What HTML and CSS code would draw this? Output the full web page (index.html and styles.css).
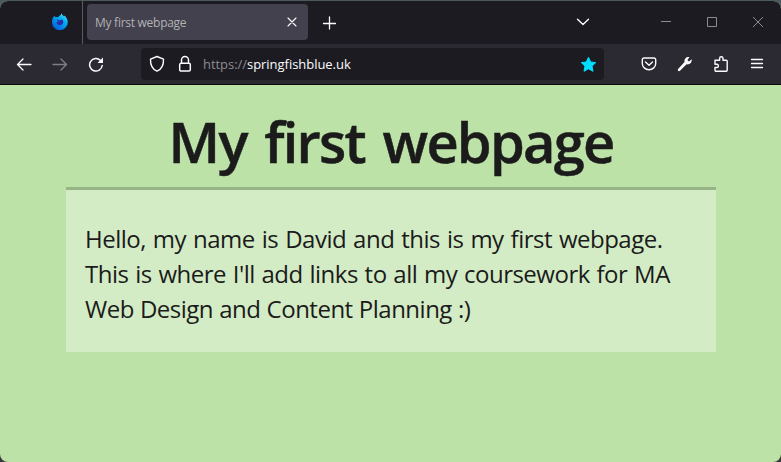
FILE: index.html
```html
<!DOCTYPE html>
<html lang="en">
<head>
<meta charset="utf-8">
<title>My first webpage</title>
<link rel="stylesheet" href="styles.css">
</head>
<body>
<div class="window">
  <div class="tabs">
    <div class="pinned">
      <svg width="18" height="18" viewBox="0 0 18 18">
        <defs><linearGradient id="fox" x1="1" y1="0" x2=".3" y2="1"><stop offset="0" stop-color="#80ebff"/><stop offset=".4" stop-color="#00b3f4"/><stop offset="1" stop-color="#0060df"/></linearGradient></defs>
        <path fill="url(#fox)" d="M3.2 3.1c.5.2 1 .7 1.3 1.1.9-.3 1.8-.2 2.6.2C8 2.700 9 2.300 9.800 2c.1-.8.400-1.300.8-1.800.4 1.500 1.500 2.100 2.500 3.200l.2-1c1.600 1.200 3.500 3.600 3.500 6.800A7.900 7.900 0 0 1 1 9.500C1 7 1.700 4.600 3.200 3.100z"/>
        <path fill="#2b2da8" d="M5.600 6.600c1-.1 2 .2 2.600.8l2.500-.9c1.600.9 2 2.600 1.200 4.100-1.100 1.900-3.700 2.200-5.300.9-.9-.8-1.200-1.800-1-2.700l2 .2c-.8-.8-1.500-1.600-2-2.400z"/>
      </svg>
    </div>
    <div class="tab"><span class="tab-title">My first webpage</span>
      <svg class="icon" width="10" height="10" viewBox="0 0 10 10"><path stroke-width="1.100" d="M1 1l8 8M9 1L1 9"/></svg>
    </div>
    <svg class="icon new-tab" width="14" height="14" viewBox="0 0 14 14"><path d="M7.500 1v12M1.500 7.500h12"/></svg>
    <svg class="icon all-tabs" width="14" height="8" viewBox="0 0 14 8"><path stroke-width="1.400" d="M1.500 1.300L7 6.500l5.500-5.200"/></svg>
    <div class="controls">
      <svg width="12" height="12" viewBox="0 0 12 12"><path d="M1 5.500h10"/></svg>
      <svg width="12" height="12" viewBox="0 0 12 12"><path d="M1.500 1.500h9v9h-9z"/></svg>
      <svg width="12" height="12" viewBox="0 0 12 12"><path d="M1 1l10 10M11 1L1 11"/></svg>
    </div>
  </div>
  <div class="toolbar">
    <div class="nav">
      <svg class="icon" width="16" height="16" viewBox="0 0 16 16"><path d="M15 8.500H1.500M7 3L1.500 8.500 7 14"/></svg>
      <svg class="icon off" width="16" height="16" viewBox="0 0 16 16"><path d="M1 8.500h13.500M9 3l5.500 5.500L9 14"/></svg>
      <svg class="icon" width="16" height="16" viewBox="0 0 16 16"><path stroke-width="1.500" d="M14.200 9.500A6.300 6.300 0 1 1 12.500 4.400"/><path fill="#fbfbfe" stroke="none" d="M15 1.500V7H9.500z"/></svg>
    </div>
    <div class="address">
      <svg class="icon" width="16" height="18" viewBox="0 0 16 18"><path stroke-width="1.400" d="M8 1.500l6.500 2.700c.2 5.600-1.600 9.900-6.500 12C3.100 14.100 1.300 9.800 1.500 4.200z"/></svg>
      <svg class="icon" width="14" height="18" viewBox="0 0 14 18"><path stroke-width="1.500" d="M3.500 8V5a3.500 3.500 0 0 1 7 0v3M3 8.300h8a1.300 1.300 0 0 1 1.300 1.300v5.100A1.300 1.300 0 0 1 11 16H3a1.300 1.300 0 0 1-1.300-1.300V9.600A1.300 1.300 0 0 1 3 8.300z"/></svg>
      <span class="url"><span class="scheme">https://</span>springfishblue.uk</span>
      <svg class="star" width="17" height="17" viewBox="0 0 17 17"><path d="M8.500 1.300l2.200 4.700 5.100.6-3.800 3.500 1 5.200-4.500-2.500L4 15.300l1-5.200-3.800-3.500 5.100-.6z"/></svg>
    </div>
    <div class="tools">
      <svg class="icon" width="16" height="16" viewBox="0 0 16 16"><path stroke-width="1.400" d="M3 2h10a1.700 1.700 0 0 1 1.700 1.700V7.500a6.700 6.200 0 0 1-13.400 0V3.700A1.700 1.700 0 0 1 3 2zM4.500 6L8 9.300 11.500 6"/></svg>
      <svg class="icon" width="16" height="16" viewBox="0 0 16 16"><path fill="#fbfbfe" stroke="none" d="M14.600 3.200L12 5.400 10.500 4.200l1.900-3.100C9.600.4 7 2.700 7.500 5.900L1.100 13a1.300 1.300 0 0 0 1.900 1.800l6.600-6.500c3.100.6 5.700-2 5-5.100z"/></svg>
      <svg class="icon" width="16" height="18" viewBox="0 0 16 18"><path stroke-width="1.400" d="M2 7.500V5.300h4.600V3.500a1.700 1.700 0 0 1 3.400 0v1.800h3.200a1 1 0 0 1 1 1v9a1 1 0 0 1-1 1H3a1 1 0 0 1-1-1V12.500h1.800a1.600 1.600 0 0 0 0-3.200H2z"/></svg>
      <svg class="icon" width="16" height="16" viewBox="0 0 16 16"><path d="M2.500 3.500h11M2.500 7.500h11M2.500 11.500h11"/></svg>
    </div>
  </div>
  <main class="page">
    <h1>My first webpage</h1>
    <p class="intro"><span class="l1">Hello, my name is David and this is my first webpage.</span><span class="l2">This is where I'll add links to all my coursework for MA</span><span class="l3">Web Design and Content Planning :)</span></p>
  </main>
</div>
</body>
</html>
```
FILE: styles.css
```css
* { box-sizing: border-box; }
body { margin: 0; padding-top: 1px; height: 462px; background: linear-gradient(#4b5a5c, #38393c); overflow: hidden; }
svg { display: block; flex: none; }
.window { height: 461px; border-radius: 8px; overflow: hidden; background: #bde2a8; font-family: "Open Sans", sans-serif; }
.tabs { display: flex; align-items: center; height: 43px; background: #1c1b22; }
.pinned { width: 83px; height: 43px; padding: 12px 0 0 51px; border-right: 1px solid #5b5b60; }
.tab { display: flex; align-items: center; justify-content: space-between; width: 221px; height: 36px; margin: 0 0 1px 4px; padding: 0 11px 0 8px; border-radius: 4px; background: #42414d; }
.tab-title { font-size: 12px; color: #b2b2b5; white-space: nowrap; letter-spacing: -.27px; }
.icon { fill: none; stroke: #fbfbfe; stroke-width: 1.3; stroke-linecap: round; stroke-linejoin: round; }
.new-tab { margin-left: 14px; }
.all-tabs { margin: 0 0 2px 240px; }
.controls { display: flex; gap: 34px; margin: 0 0 1px 70px; fill: none; stroke: #8b8b90; stroke-width: 1; }
.toolbar { display: flex; align-items: center; height: 41px; padding-left: 16px; border-bottom: 1px solid #0c0c0d; background: #2b2a33; }
.nav { display: flex; gap: 20px; width: 125px; }
.off { opacity: .4; }
.address { display: flex; align-items: center; width: 463px; height: 32px; padding: 0 7px 0 8px; border-radius: 4px; background: #1c1b22; }
.address .icon + .icon { margin-left: 13px; }
.url { flex: 1; margin-left: 11px; font-size: 13px; color: #fbfbfe; white-space: nowrap; letter-spacing: -.04px; }
.scheme { color: #8c8c91; }
.star { fill: #00ddff; stroke: #00ddff; stroke-linejoin: round; }
.tools { display: flex; align-items: center; gap: 20px; margin-left: 37px; }
.page { padding: 21px 65px 0 66px; color: #1b1b1b; }
h1 { margin: 0; height: 81px; line-height: 70px; font-size: 56px; font-weight: 600; text-align: center; white-space: nowrap; letter-spacing: -1.8px; word-spacing: 5px; -webkit-text-stroke: .5px #1b1b1b; }
.intro { margin: 0; height: 165px; padding: 31px 19px 0; border-top: 3px solid #97b487; background: #d3ecc5; font-size: 24px; line-height: 35px; }
.intro span { display: block; white-space: nowrap; letter-spacing: -.5px; }
.intro .l1 { word-spacing: 1.2px; }
.intro .l2 { word-spacing: 1px; }
.intro .l3 { word-spacing: .4px; }
```
